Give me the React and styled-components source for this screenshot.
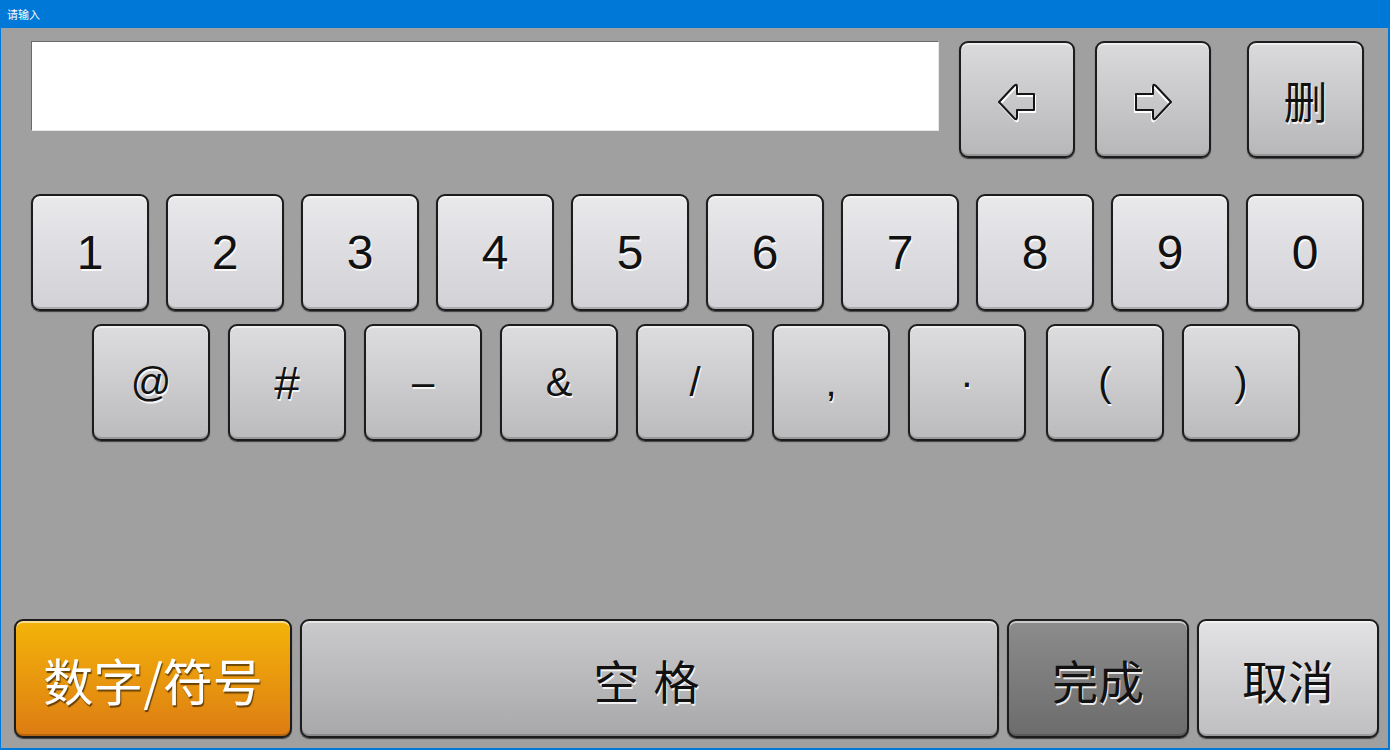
import React from 'react';
import styled, { createGlobalStyle, css } from 'styled-components';

const GlobalStyle = createGlobalStyle`
  html, body { margin: 0; padding: 0; }
  body {
    background: #a0a0a0;
    font-family: "Liberation Sans", "Noto Sans CJK SC", sans-serif;
    overflow: hidden;
  }
`;

const Window = styled.div`
  width: 1390px;
  height: 750px;
  box-sizing: border-box;
  display: flex;
  flex-direction: column;
  background: #a0a0a0;
  border-left: 1px solid #0078d7;
  border-right: 2px solid #0078d7;
  border-bottom: 2px solid #0078d7;
`;

const TitleBar = styled.div`
  height: 28px;
  flex: none;
  margin-left: -1px;
  margin-right: -2px;
  background: #0078d7;
  color: #fff;
  font-family: "Noto Sans CJK SC", sans-serif;
  font-size: 11px;
  line-height: 28px;
  padding-left: 7px;
`;

const Body = styled.div`
  flex: 1;
  display: flex;
  flex-direction: column;
  padding: 13px 0 10px;
`;

const TopRow = styled.div`
  display: flex;
  align-items: flex-start;
  margin-left: 30px;
`;

const TextField = styled.div`
  width: 908px;
  height: 90px;
  box-sizing: border-box;
  background: #fff;
  border-top: 1px solid #6a6a6a;
  border-left: 1px solid #6a6a6a;
  border-right: 1px solid #e8e8e8;
  border-bottom: 1px solid #e8e8e8;
  margin-right: 20px;
`;

const Row = styled.div`
  display: flex;
  gap: ${p => p.$gap}px;
  margin-left: ${p => p.$left}px;
  margin-top: ${p => p.$top}px;
`;

const BottomRow = styled.div`
  display: flex;
  gap: 8px;
  margin-left: 13px;
  margin-top: auto;
`;

const tones = {
  num: css`background: linear-gradient(#e9e9ec, #d1d1d6);`,
  sym: css`background: linear-gradient(#dddde0, #bbbbbe);`,
  nav: css`background: linear-gradient(#dadadd, #b7b7ba);`,
  space: css`background: linear-gradient(#cacacd, #a8a8aa);`,
  orange: css`background: linear-gradient(#f4b409, #dd7c13);`,
  dark: css`background: linear-gradient(#8c8c8c, #6c6c6c);`,
  cancel: css`background: linear-gradient(#e2e2e5, #bfbfc2);`,
};

const Key = styled.div`
  width: ${p => p.$w || 118}px;
  height: ${p => p.$h || 117}px;
  margin-right: ${p => p.$mr || 0}px;
  margin-left: ${p => p.$ml || 0}px;
  flex: none;
  box-sizing: border-box;
  border: 2px solid #1c1c1c;
  border-radius: 9px;
  ${p => tones[p.$tone || 'num']}
  box-shadow: inset 0 2px 0 rgba(255, 255, 255, 0.55),
    inset 0 -2px 0 rgba(0, 0, 0, 0.18),
    0 1px 1px rgba(0, 0, 0, 0.6);
  display: flex;
  align-items: center;
  justify-content: center;
  padding-left: ${p => p.$pl || 0}px;
  color: ${p => (p.$tone === 'orange' ? '#fff' : '#111')};
  text-shadow: ${p => (p.$tone === 'orange'
    ? '1px 2px 1px rgba(0,0,0,0.55)'
    : '1px 2px 0 rgba(255,255,255,0.85)')};
  font-size: ${p => p.$fs || 48}px;
  letter-spacing: ${p => p.$ls || 0}px;
  font-family: ${p => (p.$cjk
    ? '"Noto Sans CJK SC", sans-serif'
    : '"Liberation Sans", "DejaVu Sans", sans-serif')};
  user-select: none;
`;

const ARROW = 'M2 20 L17 4 Q20 1 20 5 L20 12 L37 12 L37 28 L20 28 L20 35 Q20 39 17 36 Z';

const Arrow = ({ flip }) => (
  <svg width="40" height="40" viewBox="0 0 40 40"
    style={{ transform: flip ? 'scaleX(-1)' : 'none', overflow: 'visible', marginTop: 4 }}>
    <path d={ARROW} fill="none" stroke="#fff" strokeWidth="2"
      strokeLinejoin="round" transform="translate(1 2)" />
    <path d={ARROW} fill="none" stroke="#151515" strokeWidth="2"
      strokeLinejoin="round" />
  </svg>
);

const digits = ['1', '2', '3', '4', '5', '6', '7', '8', '9', '0'];
const symbols = [
  { c: '@', fs: 40 },
  { c: '#', fs: 46 },
  { c: '–', fs: 40 },
  { c: '&', fs: 40 },
  { c: '/', fs: 40 },
  { c: ',', fs: 40 },
  { c: '·', fs: 40 },
  { c: '(', fs: 40, ml: 2 },
  { c: ')', fs: 40 },
];

export default function App() {
  return (
    <>
      <GlobalStyle />
      <Window>
        <TitleBar>请输入</TitleBar>
        <Body>
          <TopRow>
            <TextField />
            <Key $tone="nav" $w={116} $mr={20}><Arrow /></Key>
            <Key $tone="nav" $w={116} $mr={36}><Arrow flip /></Key>
            <Key $tone="nav" $w={117} $cjk $fs={44}>删</Key>
          </TopRow>
          <Row $gap={17} $left={30} $top={36}>
            {digits.map(d => <Key key={d} $tone="num">{d}</Key>)}
          </Row>
          <Row $gap={18} $left={91} $top={13}>
            {symbols.map(s => (
              <Key key={s.c} $tone="sym" $fs={s.fs} $ml={s.ml}>{s.c}</Key>
            ))}
          </Row>
          <BottomRow>
            <Key $tone="orange" $w={278} $h={119} $cjk $fs={50}>数字/符号</Key>
            <Key $tone="space" $w={699} $h={119} $cjk $fs={46} $ls={14} $pl={8}>空格</Key>
            <Key $tone="dark" $w={182} $h={119} $cjk $fs={46}>完成</Key>
            <Key $tone="cancel" $w={182} $h={119} $cjk $fs={46}>取消</Key>
          </BottomRow>
        </Body>
      </Window>
    </>
  );
}
